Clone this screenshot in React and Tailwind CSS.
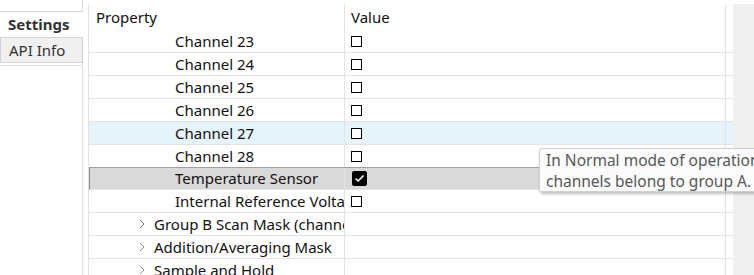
import React from 'react';

const font = { fontFamily: '"Noto Sans", "Open Sans", sans-serif' };

const Chevron = () => (
  <svg width="6" height="10" viewBox="0 0 6 10" className="shrink-0">
    <polyline points="1,1 5,5 1,9" fill="none" stroke="#8a8a8a" strokeWidth="1" />
  </svg>
);

const Box = ({ checked }) =>
  checked ? (
    <span className="ml-[7px] flex h-[15px] w-[15px] items-center justify-center rounded-[2px] bg-black">
      <svg width="11" height="9" viewBox="0 0 11 9">
        <polyline points="1.5,4.5 4.2,7 9.5,1.5" fill="none" stroke="#fff" strokeWidth="1.6" />
      </svg>
    </span>
  ) : (
    <span className="ml-[6px] block h-[11px] w-[11px] border border-black bg-white" />
  );

const rows = [
  { name: 'Channel 23', box: 'off' },
  { name: 'Channel 24', box: 'off' },
  { name: 'Channel 25', box: 'off' },
  { name: 'Channel 26', box: 'off' },
  { name: 'Channel 27', box: 'off', hover: true },
  { name: 'Channel 28', box: 'off' },
  { name: 'Temperature Sensor', box: 'on', selected: true },
  { name: 'Internal Reference Voltage', box: 'off' },
  { name: 'Group B Scan Mask (channels)', group: true },
  { name: 'Addition/Averaging Mask', group: true },
  { name: 'Sample and Hold', group: true },
];

export default function App() {
  return (
    <div className="relative flex h-[275px] w-[754px] overflow-hidden bg-white text-[15px] text-[#111]" style={font}>
      {/* Tabs */}
      <div className="flex w-[83px] shrink-0 flex-col">
        <div className="h-[11px] border-r border-[#d9d9d9]" />
        <div className="flex h-[26px] items-center border-t border-[#d9d9d9] pl-[8px] font-bold text-[#333]">
          Settings
        </div>
        <div className="flex h-[26px] items-center border border-[#d4d4d4] bg-[#f0f0f0] pl-[8px] text-[#333]">
          API Info
        </div>
        <div className="h-[3px] border-b border-r border-[#e3e3e3]" />
        <div className="flex-1 border-r border-[#e3e3e3]" />
      </div>

      {/* Property grid */}
      <div className="ml-[5px] mt-[4px] flex">
        <div className="w-[645px] border-l border-[#e3e3e3]">
          <div className="flex h-[26px]">
            <div className="flex w-[256px] items-center border-r border-[#e3e3e3] pl-[7px]">Property</div>
            <div className="flex w-[381px] items-center border-r border-[#e3e3e3] pl-[6px]">Value</div>
            <div className="w-[7px]" />
          </div>
          {rows.map((r) => (
            <div
              key={r.name}
              className={`flex h-[23px] border-b ${
                r.selected
                  ? 'border-t border-l border-t-[#a0a0a0] border-l-[#8a8a8a] border-b-[#e3e3e3] bg-[#d9d9d9] -mt-px'
                  : r.hover
                  ? 'border-[#e3e3e3] bg-[#e5f3fb]'
                  : 'border-[#e3e3e3]'
              }`}
            >
              <div
                className={`flex items-center overflow-hidden whitespace-nowrap border-r border-[#e3e3e3] ${
                  r.group ? 'pl-[50px]' : r.selected ? 'pl-[85px]' : 'pl-[86px]'
                } ${r.selected ? 'w-[255px]' : 'w-[256px]'}`}
              >
                {r.group && (
                  <span className="mr-[9px] flex items-center">
                    <Chevron />
                  </span>
                )}
                {r.name}
              </div>
              <div className="flex w-[381px] items-center border-r border-[#e3e3e3]">
                {r.box === 'on' && <Box checked />}
                {r.box === 'off' && <Box />}
              </div>
              <div className="w-[7px]" />
            </div>
          ))}
        </div>
        <div className="w-[21px] bg-[#f0f0f0]" />
      </div>

      {/* Tooltip */}
      <div className="absolute left-[539px] top-[148px] h-[44px] w-[240px] rounded-[3px] border border-[#d0d0d0] bg-[#fbfbfb] pl-[6px] pt-[1px] text-[15.5px] leading-[21px] text-[#575757] shadow-[1px_2px_3px_rgba(0,0,0,0.25)]">
        <div className="whitespace-nowrap">In Normal mode of operation, the</div>
        <div className="whitespace-nowrap">channels belong to group A.</div>
      </div>
    </div>
  );
}
